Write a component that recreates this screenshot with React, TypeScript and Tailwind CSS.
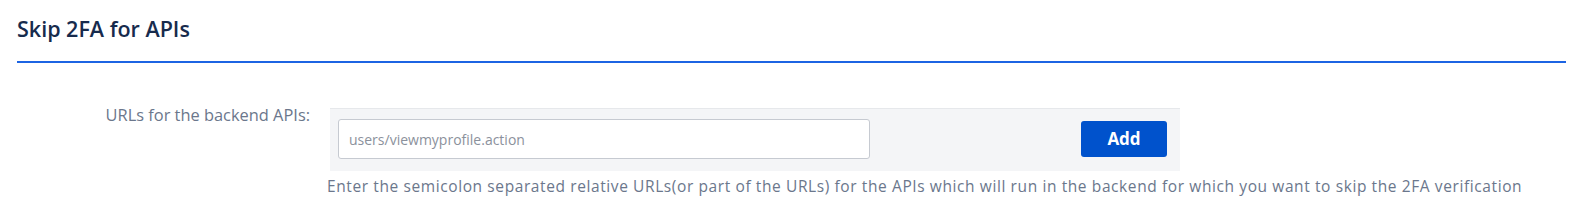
import React from "react";

export default function App() {
  return (
    <div className="w-[1589px] h-[220px] bg-white font-['Open_Sans','Noto_Sans',sans-serif]">
      <div className="pl-[17px] pr-[23px] pt-[14px]">
        <h2 className="text-[21.5px] leading-[30px] font-semibold text-[#172b4d]">Skip 2FA for APIs</h2>
        <div className="mt-[17px] h-[2px] bg-[#1c64e3]" />
      </div>
      <div className="flex mt-[45px]">
        <div className="w-[310px] shrink-0 text-right -mt-[8px] text-[16.4px] leading-[30px] text-[#6b778c]">
          URLs for the backend APIs:
        </div>
        <div className="ml-[20px] flex flex-col">
          <div className="w-[850px] h-[63px] bg-[#f4f5f7] border-t border-[#e6e8eb] flex items-start justify-between pl-[8px] pr-[13px] pt-[10px]">
            <input
              className="w-[532px] h-[40px] bg-white border border-[#c6cad1] rounded-[3px] px-[10px] text-[14px] text-[#42526e] placeholder:text-[#8b919c] outline-none"
              placeholder="users/viewmyprofile.action"
            />
            <button className="mt-[2px] w-[86px] h-[36px] bg-[#0052cc] rounded-[3px] text-white text-[17px] font-bold">
              Add
            </button>
          </div>
          <div className="-ml-[3px] mt-[5px] text-[15.5px] tracking-[0.6px] leading-[20px] text-[#6b778c] whitespace-nowrap">
            Enter the semicolon separated relative URLs(or part of the URLs) for the APIs which will run in the backend for which you want to skip the 2FA verification
          </div>
        </div>
      </div>
    </div>
  );
}
